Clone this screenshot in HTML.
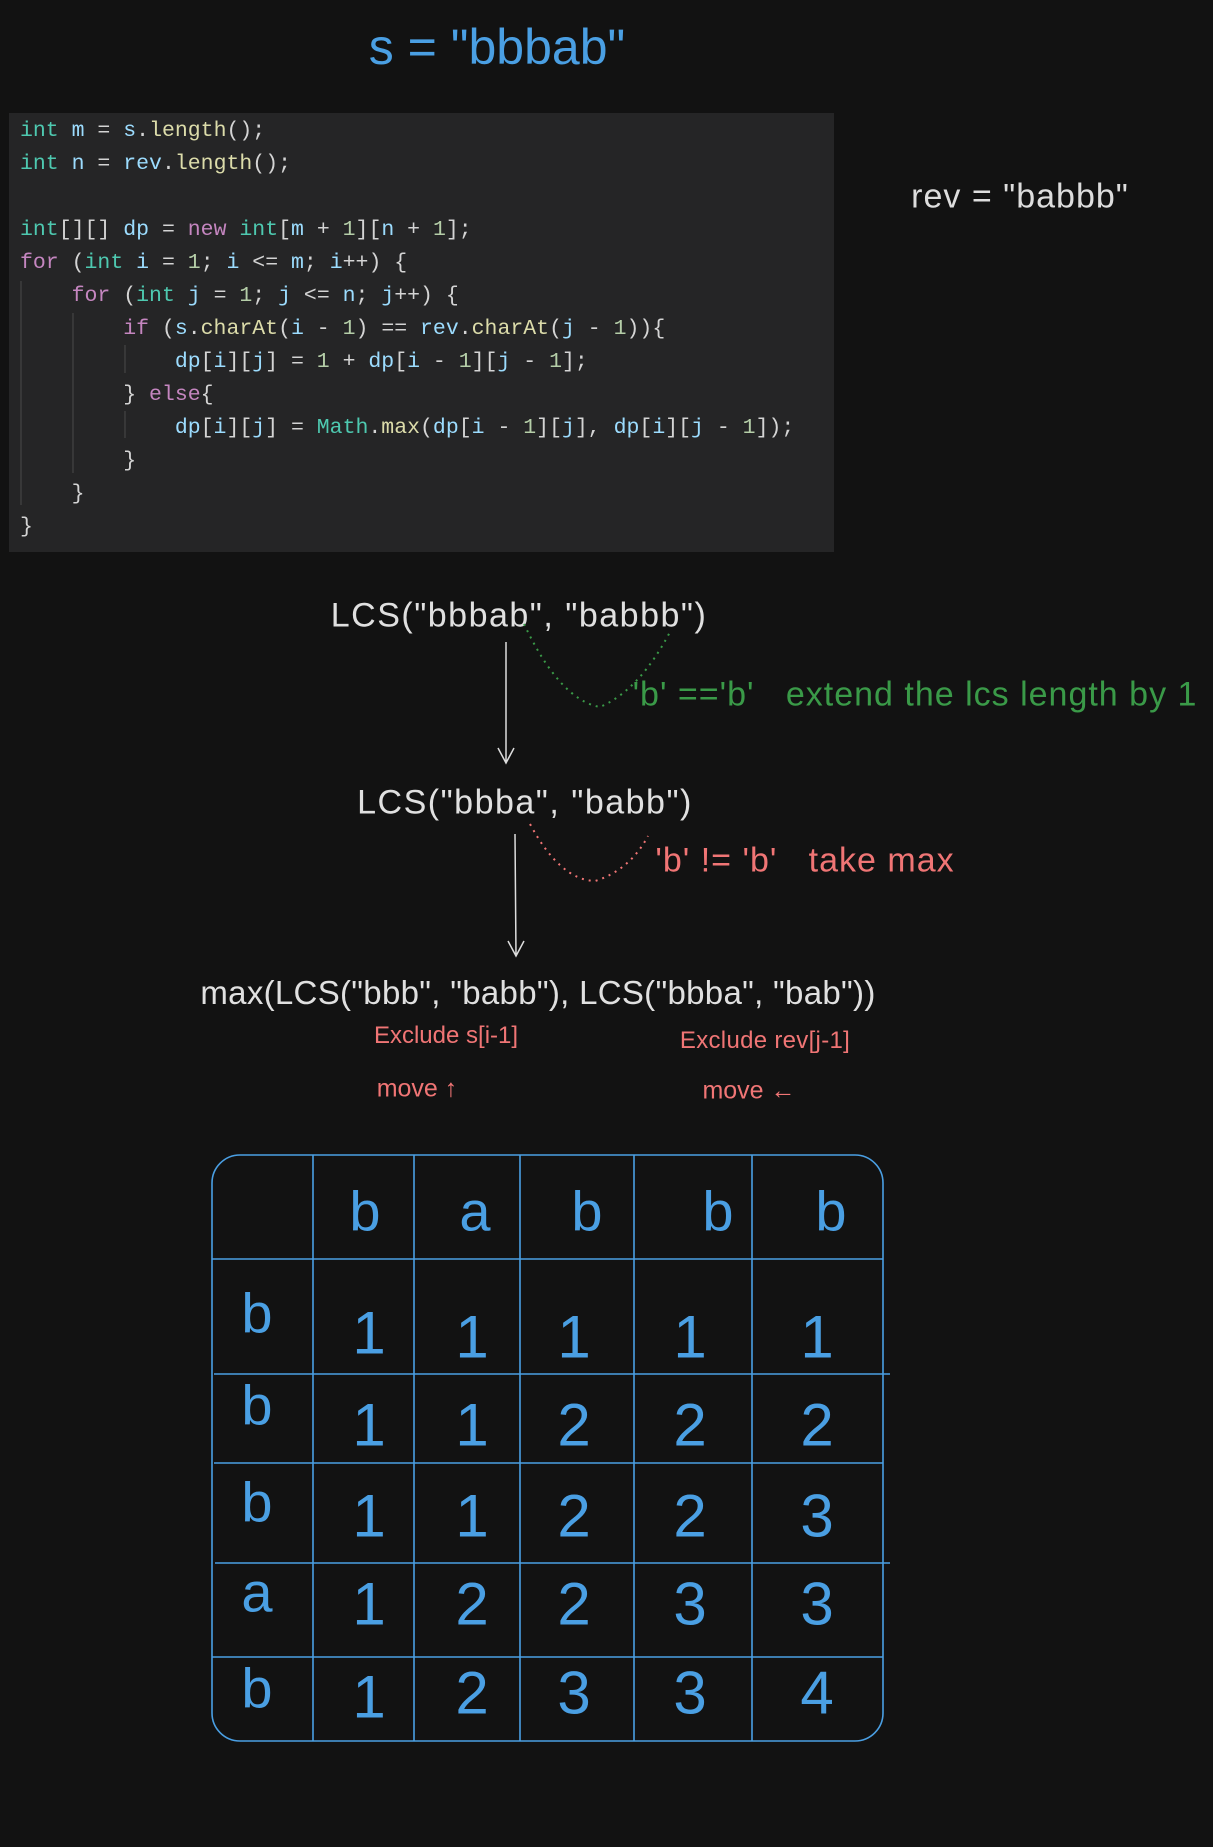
<!DOCTYPE html>
<html><head><meta charset="utf-8"><style>
body{margin:0;width:1213px;height:1847px;background:#121212;position:relative;overflow:hidden;font-family:"Liberation Sans","DejaVu Sans",sans-serif}
.t{position:absolute;white-space:nowrap;transform:translate(-50%,-50%)}
.code{position:absolute;left:9px;top:113px;width:825px;height:439px;background:#252526}
.k{color:#4ec9b0}.v{color:#9cdcfe}.f{color:#dcdcaa}.p{color:#c586c0}.n{color:#b5cea8}
.blue{color:#4a9fe3}
</style></head><body>
<div class="t blue" style="left:497px;top:47px;font-size:50px">s = "bbbab"</div>
<div class="code"></div>
<svg style="position:absolute;left:0;top:0" width="1213" height="1847">
<g stroke="#444" stroke-width="1.2">
<path d="M21 281V505M73 313V473M125 345V373M125 411V438"/>
</g></svg>
<pre style="position:absolute;left:20px;top:115px;margin:0;font-family:'Liberation Mono',monospace;font-size:21.5px;line-height:33px;color:#d4d4d4"><span class="k">int</span> <span class="v">m</span> = <span class="v">s</span>.<span class="f">length</span>();
<span class="k">int</span> <span class="v">n</span> = <span class="v">rev</span>.<span class="f">length</span>();

<span class="k">int</span>[][] <span class="v">dp</span> = <span class="p">new</span> <span class="k">int</span>[<span class="v">m</span> + <span class="n">1</span>][<span class="v">n</span> + <span class="n">1</span>];
<span class="p">for</span> (<span class="k">int</span> <span class="v">i</span> = <span class="n">1</span>; <span class="v">i</span> &lt;= <span class="v">m</span>; <span class="v">i</span>++) {
    <span class="p">for</span> (<span class="k">int</span> <span class="v">j</span> = <span class="n">1</span>; <span class="v">j</span> &lt;= <span class="v">n</span>; <span class="v">j</span>++) {
        <span class="p">if</span> (<span class="v">s</span>.<span class="f">charAt</span>(<span class="v">i</span> - <span class="n">1</span>) == <span class="v">rev</span>.<span class="f">charAt</span>(<span class="v">j</span> - <span class="n">1</span>)){
            <span class="v">dp</span>[<span class="v">i</span>][<span class="v">j</span>] = <span class="n">1</span> + <span class="v">dp</span>[<span class="v">i</span> - <span class="n">1</span>][<span class="v">j</span> - <span class="n">1</span>];
        } <span class="p">else</span>{
            <span class="v">dp</span>[<span class="v">i</span>][<span class="v">j</span>] = <span class="k">Math</span>.<span class="f">max</span>(<span class="v">dp</span>[<span class="v">i</span> - <span class="n">1</span>][<span class="v">j</span>], <span class="v">dp</span>[<span class="v">i</span>][<span class="v">j</span> - <span class="n">1</span>]);
        }
    }
}</pre>
<div class="t" style="left:1020px;top:197px;font-size:34px;letter-spacing:1px;color:#ddd">rev = "babbb"</div>
<div class="t" style="left:519px;top:616px;font-size:34px;letter-spacing:1.5px;color:#e0e0e0">LCS("bbbab", "babbb")</div>
<div class="t" style="left:915px;top:695px;font-size:34px;letter-spacing:1px;color:#3a9a48">'b' =='b'&nbsp;&nbsp; extend the lcs length by 1</div>
<div class="t" style="left:525px;top:803px;font-size:34px;letter-spacing:1.5px;color:#e0e0e0">LCS("bbba", "babb")</div>
<div class="t" style="left:805px;top:861px;font-size:34px;letter-spacing:1px;color:#f07575">'b' != 'b'&nbsp;&nbsp; take max</div>
<div class="t" style="left:538px;top:993px;font-size:33px;letter-spacing:0.3px;color:#e0e0e0">max(LCS("bbb", "babb"), LCS("bbba", "bab"))</div>
<div class="t" style="left:446px;top:1036px;font-size:24px;color:#f07575">Exclude s[i-1]</div>
<div class="t" style="left:765px;top:1041px;font-size:24px;letter-spacing:0.3px;color:#f07575">Exclude rev[j-1]</div>
<div class="t" style="left:417px;top:1089px;font-size:25px;color:#f07575">move ↑</div>
<div class="t" style="left:749px;top:1091px;font-size:25px;color:#f07575">move ←</div>
<svg style="position:absolute;left:0;top:0" width="1213" height="1847">
<g stroke="#ddd" stroke-width="1.5" fill="none">
<path d="M506 642 L506 763 M498 748 L506 763 L514 748"/>
<path d="M515 834 L516 956 M508 941 L516 956 L524 941"/>
</g>
<path d="M524 624 Q560 700 600 707 Q640 690 671 630" stroke="#3a9a48" stroke-width="2" stroke-dasharray="2 5" fill="none"/>
<path d="M530 824 Q560 880 595 881 Q630 870 648 836" stroke="#f07575" stroke-width="2" stroke-dasharray="2 5" fill="none"/>
<g stroke="#4a9fe3" stroke-width="1.6" fill="none">
<rect x="212" y="1155" width="671" height="586" rx="28"/>
<path d="M313 1155V1741M414 1155V1741M520 1155V1741M634 1155V1741M752 1155V1741"/>
<path d="M212 1259H883M214 1374H890M214 1463H883M215 1563H890M212 1657H883"/>
</g>
</svg>
<div class="blue" style="font-size:56px">
<div class="t" style="left:365px;top:1211px">b</div>
<div class="t" style="left:475px;top:1211px">a</div>
<div class="t" style="left:587px;top:1211px">b</div>
<div class="t" style="left:718px;top:1211px">b</div>
<div class="t" style="left:831px;top:1211px">b</div>
<div class="t" style="left:257px;top:1313px">b</div>
<div class="t" style="left:257px;top:1405px">b</div>
<div class="t" style="left:257px;top:1502px">b</div>
<div class="t" style="left:257px;top:1592px">a</div>
<div class="t" style="left:257px;top:1688px">b</div>
</div>
<div class="blue" style="font-size:60px">
<div class="t" style="left:369px;top:1333px">1</div><div class="t" style="left:472px;top:1337px">1</div><div class="t" style="left:574px;top:1337px">1</div><div class="t" style="left:690px;top:1337px">1</div><div class="t" style="left:817px;top:1337px">1</div>
<div class="t" style="left:369px;top:1425px">1</div><div class="t" style="left:472px;top:1425px">1</div><div class="t" style="left:574px;top:1425px">2</div><div class="t" style="left:690px;top:1425px">2</div><div class="t" style="left:817px;top:1425px">2</div>
<div class="t" style="left:369px;top:1516px">1</div><div class="t" style="left:472px;top:1516px">1</div><div class="t" style="left:574px;top:1516px">2</div><div class="t" style="left:690px;top:1516px">2</div><div class="t" style="left:817px;top:1516px">3</div>
<div class="t" style="left:369px;top:1604px">1</div><div class="t" style="left:472px;top:1604px">2</div><div class="t" style="left:574px;top:1604px">2</div><div class="t" style="left:690px;top:1604px">3</div><div class="t" style="left:817px;top:1604px">3</div>
<div class="t" style="left:369px;top:1697px">1</div><div class="t" style="left:472px;top:1693px">2</div><div class="t" style="left:574px;top:1693px">3</div><div class="t" style="left:690px;top:1693px">3</div><div class="t" style="left:817px;top:1693px">4</div>
</div>
</body></html>
